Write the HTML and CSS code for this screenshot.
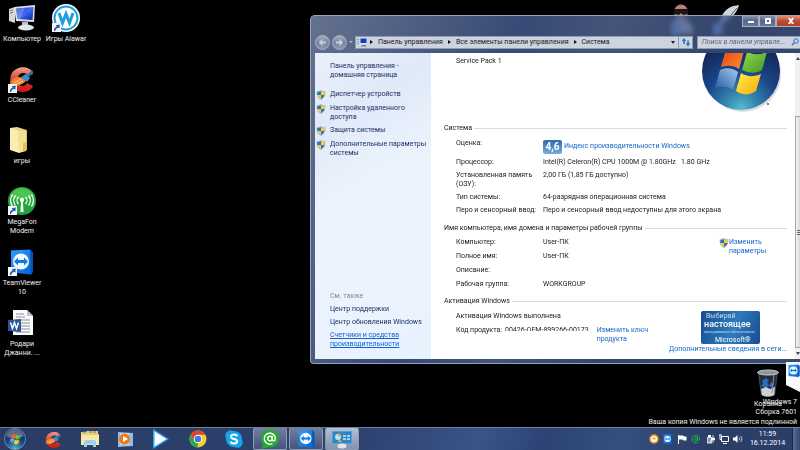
FILE: index.html
```html
<!DOCTYPE html>
<html lang="ru">
<head>
<meta charset="utf-8">
<title>Система</title>
<link rel="stylesheet" href="styles.css">
</head>
<body>
<svg class="defs" aria-hidden="true">
  <defs>
    <linearGradient id="gBlue" x1="0" y1="0" x2="1" y2="1"><stop offset="0" stop-color="#1a2fb5"/><stop offset=".5" stop-color="#3f6bf0"/><stop offset="1" stop-color="#0a1fa0"/></linearGradient>
    <linearGradient id="gTv" x1="0" y1="0" x2="1" y2="1"><stop offset="0" stop-color="#2aa0ff"/><stop offset="1" stop-color="#0360d8"/></linearGradient>
    <linearGradient id="gRed" x1="0" y1="0" x2="0" y2="1"><stop offset="0" stop-color="#f0a090"/><stop offset=".5" stop-color="#d84030"/><stop offset="1" stop-color="#c81818"/></linearGradient>
    <linearGradient id="gFold" x1="0" y1="0" x2="1" y2="0"><stop offset="0" stop-color="#f8ecae"/><stop offset="1" stop-color="#dcbf5c"/></linearGradient>
    <radialGradient id="gOrb" cx=".5" cy=".98" r=".8"><stop offset="0" stop-color="#58bcd0"/><stop offset=".25" stop-color="#3487b0"/><stop offset=".6" stop-color="#1b4688"/><stop offset="1" stop-color="#122a5c"/></radialGradient>
    <linearGradient id="gR" x1="0" y1="0" x2="1" y2="1"><stop offset="0" stop-color="#e23b12"/><stop offset="1" stop-color="#ff9430"/></linearGradient>
    <linearGradient id="gG" x1="0" y1="0" x2="1" y2="1"><stop offset="0" stop-color="#96d84e"/><stop offset="1" stop-color="#3f9822"/></linearGradient>
    <linearGradient id="gB" x1="0" y1="1" x2="1" y2="0"><stop offset="0" stop-color="#2558a6"/><stop offset="1" stop-color="#a3cbee"/></linearGradient>
    <linearGradient id="gY" x1="0" y1="0" x2="1" y2="1"><stop offset="0" stop-color="#fff04a"/><stop offset="1" stop-color="#f8a810"/></linearGradient>
    <symbol id="shield" viewBox="0 0 10 10">
      <path d="M5 0C3.700 .9 2 1.200.6 1.200.4 5 1.300 8 5 10 8.700 8 9.600 5 9.400 1.200 8 1.200 6.300.9 5 0z" fill="#a9b8c8"/>
      <path d="M5 1.200V5H1.400C1.300 4 1.300 3 1.400 2 2.800 2 4 1.700 5 1.200z" fill="#2a74cc"/><path d="M5 1.200V5h3.600c.1-1 .1-2 0-3C7.200 2 6 1.700 5 1.200z" fill="#f6cf38"/>
      <path d="M1.400 5H5v3.900C3 7.800 1.800 6.500 1.400 5z" fill="#f6cf38"/><path d="M8.600 5H5v3.900C7 7.800 8.200 6.500 8.600 5z" fill="#2a74cc"/>
    </symbol>
    <symbol id="short" viewBox="0 0 9 9"><path d="M0 0h9v9H0z" fill="#f4f7fb"/><path d="M2 8C1.700 5.500 3 4 4.700 3.700L3.700 2.300 7.700 1.400 7.500 5.600 6.200 4.800C4.500 5.300 3.300 6.300 3.300 8z" fill="#235aa8"/></symbol>
    <symbol id="flag" viewBox="0 0 54 54">
      <path d="M12 6C18 3 24 4 30 8L25 26C20 22 14 22 7 24z" fill="url(#gR)"/>
      <path d="M33 9C40 12 46 12 53 9L48 27C42 31 34 30 28 27z" fill="url(#gG)"/>
      <path d="M6 27C12 24 19 25 24 29L19 47C14 43 7 43 1 45z" fill="url(#gB)"/>
      <path d="M27 30C33 34 40 34 47 31L42 48C35 53 28 52 22 48z" fill="url(#gY)"/>
    </symbol>
    <symbol id="cc" viewBox="0 0 26 26">
      <path d="M24 8C22-1 6-1 2 9-1 18 5 26 13 26c4 0 9-1 11-6l-6-3c-2 4-7 4-9 0-2-5 1-10 5-10 3 0 4 1 4 3z" fill="url(#gRed)"/>
      <path d="M1 16C5 11 9 10 14 12l3 3C12 20 5 21 2 19z" fill="#f08030"/><path d="M5 17l7-4M6 19l8-4" stroke="#ffd090" fill="none"/>
      <path d="M12 11l5-3 4 4-3 4z" fill="#2f8fd0"/><path d="M18 9l5-5 1 2-4 5z" fill="#3c6ca8"/>
    </symbol>
    <symbol id="tv" viewBox="0 0 24 26"><path d="M1 2L20 1l3 3v19l-2 3L1 24z" fill="url(#gTv)"/><path d="M20 1l3 3v19l-2 3z" fill="#0a4fb4"/><circle cx="11" cy="13" r="8" fill="#f5f8fb"/><path d="M4 13l4-4v2.500h6V9l4 4-4 4v-2.500H8V17z" fill="#0d7ce0"/></symbol>
  </defs>
</svg>

<div class="screen">
  <main class="desktop">
    <nav class="icons" aria-label="Рабочий стол">
      <a class="icon" href="#"><svg viewBox="0 0 28 28"><path d="M1 5l6-2v16l-6-2z" fill="#d4d8da"/><path d="M2 7l3-1M2 9l3-.5" stroke="#778"/><path d="M6 3l21-2-1 17-18-1z" fill="#d9e2ea"/><path d="M8 4.500L25.500 3l-1 13-15-1z" fill="url(#gBlue)"/><path d="M8 4.500L17 4l-5 11-2.500 0z" fill="#fff" opacity=".25"/><path d="M14 18h6v4h-6z" fill="#b8c2ca"/><ellipse cx="18" cy="23.500" rx="8" ry="3" fill="#dfe5ea"/></svg><span>Компьютер</span></a>
      <a class="icon" href="#"><svg viewBox="0 0 28 28"><use href="#cc" x="1" y="1" width="26" height="26"/><use href="#short" y="19" width="9" height="9"/></svg><span>CCleaner</span></a>
      <a class="icon" href="#"><svg viewBox="0 0 28 28"><path d="M2 2l7-1 10 3v20l-8 2-9-3z" fill="url(#gFold)"/><path d="M10 4l8 1v20l-7 2z" fill="#f4e294"/><path d="M2 2l8 3 1 22-9-3z" fill="#f9edb4"/><path d="M15 17l4-1v8l-4 1z" fill="#e2c34e"/></svg><span>игры</span></a>
      <a class="icon" href="#"><svg viewBox="0 0 28 28"><circle cx="14" cy="14" r="14" fill="#22a53a"/><path d="M2 8C8-1 20-1 26 8 20 14 8 14 2 8z" fill="#62cf62" opacity=".7"/><g fill="none" stroke="#fff" stroke-width="1.300"><path d="M10.500 10a5 5 0 000 7M7.500 8.500a8 8 0 000 10M4.500 7.500a11 11 0 000 12M17.500 10a5 5 0 010 7M20.500 8.500a8 8 0 010 10M23.500 7.500a11 11 0 010 12"/></g><circle cx="14" cy="13" r="2.200" fill="#fff"/><path d="M13.200 14h1.600l.8 11h-3.200z" fill="#fff"/><use href="#short" y="19" width="9" height="9"/></svg><span>MegaFon<br>Modem</span></a>
      <a class="icon" href="#"><svg viewBox="0 0 28 28"><use href="#tv" x="2" y="0" width="24" height="27"/><use href="#short" y="19" width="9" height="9"/></svg><span>TeamViewer<br>10</span></a>
      <a class="icon" href="#"><svg viewBox="0 0 28 28"><path d="M5 1h14l6 6v19H5z" fill="#fbfbfb"/><path d="M19 1v6h6z" fill="#bfc4c8"/><path d="M8 5h8M8 8h9M8 11h14M13 14h9M13 17h9M13 20h9M8 23h14" stroke="#8b8f94"/><path d="M0 11l13-1v13L0 22z" fill="#2b5797"/><path d="M2.500 13.500l2 6 2-6 2 6 2-6" fill="none" stroke="#fff" stroke-width="1.500"/></svg><span>Родари<br>Джанни. ...</span></a>
      <a class="icon" href="#"><svg viewBox="0 0 28 28"><circle cx="14" cy="14" r="14" fill="#fff"/><circle cx="14" cy="14" r="11.500" fill="none" stroke="#1c9fdc" stroke-width="2"/><path d="M7 9l3.500 10L14 10l3.500 9L21 9" fill="none" stroke="#1c9fdc" stroke-width="3"/><use href="#short" y="19" width="9" height="9"/></svg><span>Игры Alawar</span></a>
    </nav>

    <svg class="behind" viewBox="0 0 76 32" aria-hidden="true"><ellipse cx="10" cy="9" rx="7" ry="7.500" fill="#b88070"/><path d="M3 6h14v5l-5 1-2-2-2 2-5-1z" fill="#201418"/><path d="M-2 31c0-12 6-15 12-15s12 3 12 15z" fill="#d6d9e8"/><path d="M50 14C55 5 60 3 68 2 66 9 62 14 54 19l-10 12z" fill="#d0d4d6"/><path d="M44 31L66 5" stroke="#555d60"/><path d="M0 20h9v12H0zM42 20h10v12h-10z" fill="#6fb0ff"/></svg>

    <a class="icon bin" href="#"><svg viewBox="0 0 28 28"><path d="M4 3l20-1-3 24c-4 2-10 2-14 0z" fill="#596068"/><path d="M5 5h18l-2 17H7z" fill="#242d38"/><ellipse cx="14" cy="3.500" rx="10.500" ry="2.500" fill="#8d969d" stroke="#c6ccd0"/><path d="M8 12l4-3 3 3-2 1 2 3-3 3-5-2 2-2zM17 13l3 2-2 4-3-2z" fill="#2d6bbd"/><path d="M7 20l5-2 4 2 5-2-1 8c-4 2-9 2-12 0z" fill="#cdd1d4"/><path d="M20 6l-2 18" stroke="#8a939b"/></svg><span>Корзина</span></a>
    <p class="watermark">Windows 7<br>Сборка 7601<br>Ваша копия Windows не является подлинной</p>
    <svg class="sidetab" viewBox="0 0 14 30" aria-hidden="true"><path d="M0 0h14v30L0 23z" fill="#f8f9fb"/><use href="#tv" x="2" y="2" width="12" height="13"/></svg>

    <section class="window" aria-label="Система">
      <header class="chrome">
        <div class="caption">
          <button class="cap" aria-label="Свернуть"><svg viewBox="0 0 8 8"><path d="M1 4h6v2H1z"/></svg></button>
          <button class="cap" aria-label="Развернуть"><svg viewBox="0 0 8 8"><path fill-rule="evenodd" d="M1 1h6v6H1zM3 3v2h2V3z"/></svg></button>
          <button class="cap close" aria-label="Закрыть"><svg viewBox="0 0 8 8"><path d="M1 1h2l1 1.500L5 1h2L5.200 4 7 7H5L4 5.500 3 7H1l1.800-3z"/></svg></button>
        </div>
        <div class="navbar">
          <button class="round" aria-label="Назад"><svg viewBox="0 0 12 12"><path d="M6 2L2 6l4 4V7.200h4V4.800H6z"/></svg></button>
          <button class="round" aria-label="Вперёд"><svg viewBox="0 0 12 12"><path d="M6 2l4 4-4 4V7.200H2V4.800h4z"/></svg></button>
          <i class="tiny"></i>
          <div class="address">
            <svg class="pc" viewBox="0 0 10 9"><path d="M1 1v6" stroke="#567" stroke-dasharray="1"/><path d="M3 0h7v6H3z" fill="#dfe7ee"/><path d="M3.500.5h6v4.500h-6z" fill="#1738c8"/><path d="M5 7h4v1.500H4z" fill="#6d7f90"/></svg>
            <i class="arrow"></i><a href="#">Панель управления</a>
            <i class="arrow"></i><a href="#">Все элементы панели управления</a>
            <i class="arrow"></i><a href="#">Система</a>
            <i class="drop"></i>
            <button class="refresh" aria-label="Обновить"><svg viewBox="0 0 10 10"><path d="M3 1L.8 4h1.500v3h1.500V4h1.500zM7 9.500L4.800 6.500h1.500v-3h1.500v3h1.500z" fill="#2272c4"/></svg></button>
          </div>
          <div class="search">
            <input type="text" aria-label="Поиск" placeholder="Поиск в панели управле...">
            <svg viewBox="0 0 8 8"><circle cx="5" cy="3" r="2.200" fill="none" stroke="#2274c8"/><path d="M3.300 4.700L.8 7.200" stroke="#2274c8" stroke-width="1.300"/></svg>
          </div>
        </div>
      </header>

      <div class="body">
        <aside class="side">
          <div>
            <a class="home" href="#">Панель управления -<br>домашняя страница</a>
            <ul class="tasks">
              <li><svg class="sh"><use href="#shield"/></svg><a href="#">Диспетчер устройств</a></li>
              <li><svg class="sh"><use href="#shield"/></svg><a href="#">Настройка удаленного<br>доступа</a></li>
              <li><svg class="sh"><use href="#shield"/></svg><a href="#">Защита системы</a></li>
              <li><svg class="sh"><use href="#shield"/></svg><a href="#">Дополнительные параметры<br>системы</a></li>
            </ul>
          </div>
          <div class="also">
            <span>См. также</span>
            <a href="#">Центр поддержки</a>
            <a href="#">Центр обновления Windows</a>
            <a class="on" href="#">Счетчики и средства<br>производительности</a>
          </div>
        </aside>

        <div class="content">
          <div class="hero">
            <span>Service Pack 1</span>
            <svg class="logo" viewBox="0 0 90 66"><ellipse cx="46" cy="21" rx="38" ry="38" fill="#889" opacity=".3"/><circle cx="44" cy="18" r="39" fill="url(#gOrb)"/><use href="#flag" x="17" y="-10" width="54" height="54"/><circle cx="71" cy="51" r="1" fill="#555"/></svg>
          </div>

          <h2>Система</h2>
          <dl>
            <dt>Оценка:</dt><dd class="rate"><b>4,6</b><a href="#">Индекс производительности Windows</a></dd>
            <dt>Процессор:</dt><dd>Intel(R) Celeron(R) CPU 1000M @ 1.80GHz &nbsp; 1.80 GHz</dd>
            <dt>Установленная память<br>(ОЗУ):</dt><dd>2,00 ГБ (1,85 ГБ доступно)</dd>
            <dt>Тип системы:</dt><dd>64-разрядная операционная система</dd>
            <dt>Перо и сенсорный ввод:</dt><dd>Перо и сенсорный ввод недоступны для этого экрана</dd>
          </dl>

          <h2>Имя компьютера, имя домена и параметры рабочей группы</h2>
          <div class="split">
            <dl class="loose">
              <dt>Компьютер:</dt><dd>User-ПК</dd>
              <dt>Полное имя:</dt><dd>User-ПК</dd>
              <dt>Описание:</dt><dd></dd>
              <dt>Рабочая группа:</dt><dd>WORKGROUP</dd>
            </dl>
            <div class="change"><svg class="sh"><use href="#shield"/></svg><a href="#">Изменить<br>параметры</a></div>
          </div>

          <h2>Активация Windows</h2>
          <div class="split">
            <div class="act">
              <p>Активация Windows выполнена</p>
              <div class="keyrow"><span>Код продукта:</span><span class="key">00426-OEM-899266-00173</span><a href="#">Изменить ключ<br>продукта</a></div>
            </div>
            <div class="genuine"><span>Выбирай</span><strong>настоящее</strong><small>программное обеспечение</small><em>Microsoft®</em></div>
          </div>
          <a class="more" href="#">Дополнительные сведения в сети...</a>
        </div>
        <div class="scroll" aria-hidden="true"><i class="up"></i><i class="thumb"></i><i class="down"></i></div>
      </div>
    </section>
  </main>

  <footer class="taskbar">
    <button class="start" aria-label="Пуск"><svg viewBox="0 0 22 22"><circle cx="11" cy="11" r="10.500" fill="url(#gOrb)" stroke="#8ca6c4" stroke-width=".7"/><path d="M2 8C5-1 17-1 20 8 14 11 8 11 2 8z" fill="#fff" opacity=".3"/><use href="#flag" x="5" y="5" width="12" height="12"/></svg></button>
    <button class="slot" aria-label="CCleaner"><svg viewBox="0 0 20 20"><use href="#cc" x="1" y="2" width="17" height="17"/></svg></button>
    <button class="slot" aria-label="Проводник"><svg viewBox="0 0 20 20"><path d="M1 3h5l1-1h11v3h1v11H1z" fill="#e9cf7c"/><path d="M3 3h3M9 3h3" stroke="#3fa05a"/><path d="M13 3h3" stroke="#d25a3a"/><path d="M1 6h18v10H1z" fill="#f8e9a8"/><path d="M4 18v-5q0-2 2-2h8q2 0 2 2v5h-3v-3H7v3z" fill="#9cd0ee"/></svg></button>
    <button class="slot" aria-label="Проигрыватель"><svg viewBox="0 0 20 20"><path d="M2 3l15 1v13l-15 1z" fill="#8fc0e4"/><path d="M4 4h9v12H4z" fill="#c1def2"/><circle cx="8.500" cy="10" r="5.500" fill="#f0781e"/><path d="M7 7l5 3-5 3z" fill="#fff"/></svg></button>
    <button class="slot" aria-label="Плеер"><svg viewBox="0 0 20 20"><path d="M1 0l16 10L1 20z" fill="#28a8e8"/><path d="M2.500 2.500l12 7.500-12 7.500z" fill="#fff"/></svg></button>
    <button class="slot" aria-label="Chrome"><svg viewBox="0 0 20 20"><circle cx="10" cy="10" r="8.500" fill="#f6cc30"/><path d="M17.400 5.800H10l-3.900 6.500L2.600 5.800A8.500 8.500 0 0117.400 5.800z" fill="#de4433"/><path d="M2.600 5.800L6.100 12.300 10 14.500 9.500 18.500A8.500 8.500 0 012.600 5.800z" fill="#31a350"/><circle cx="10" cy="10" r="4.200" fill="#fff"/><circle cx="10" cy="10" r="3.300" fill="#3a7de0"/></svg></button>
    <button class="slot" aria-label="Skype"><svg viewBox="0 0 20 20"><circle cx="10" cy="10" r="8" fill="#12a5ea"/><circle cx="6.500" cy="6.500" r="5.200" fill="#12a5ea"/><circle cx="13.500" cy="13.500" r="5.200" fill="#12a5ea"/><path d="M13.200 7.300C12 5 7 5 7 7.700c0 3 6.200 1.600 6.200 4.600 0 2.800-5.400 3-6.700.4" fill="none" stroke="#fff" stroke-width="2"/></svg></button>
    <button class="slot open" aria-label="Агент"><svg viewBox="0 0 20 20"><circle cx="10" cy="9.500" r="9" fill="#25ab2c"/><path d="M3 14l-1 6 7-2z" fill="#25ab2c"/><circle cx="10" cy="9.500" r="2.300" fill="none" stroke="#fff" stroke-width="1.400"/><path d="M12.300 7v3.500c0 2 3 2 3-1A5.500 5.500 0 1012.500 14.500" fill="none" stroke="#fff" stroke-width="1.400"/></svg></button>
    <button class="slot open" aria-label="TeamViewer"><svg viewBox="0 0 20 20"><use href="#tv" x="2" y="0" width="17" height="19"/></svg></button>
    <button class="slot open current" aria-label="Система"><svg viewBox="0 0 20 20"><path d="M0 2h20v13H0z" fill="#4ba3de"/><path d="M1 3h18v11H1z" fill="#2f84c6"/><circle cx="6" cy="8" r="3" fill="#bfe2f6"/><path d="M6 8V4a4 4 0 013 3z" fill="#f7a62a"/><path d="M11 6h3v2h-3zM15 6h3v2h-3zM11 9h3v2h-3zM15 9h3v2h-3z" fill="#a6d4f0"/><path d="M6 12l2-1 2 2H6z" fill="#f0bf35"/><ellipse cx="10" cy="17" rx="4.500" ry="2.500" fill="#e6e4df"/></svg></button>
    <div class="tray">
      <svg viewBox="0 0 10 10"><circle cx="5" cy="5" r="4.700" fill="#f49a1c"/><circle cx="5" cy="5" r="2.400" fill="none" stroke="#fff" stroke-width="1.400"/><path d="M5 5v3" stroke="#fff" stroke-width="1.500"/></svg>
      <svg viewBox="0 0 10 10"><use href="#tv" width="10" height="10"/></svg>
      <svg viewBox="0 0 10 10"><path d="M1.500 1v9" stroke="#fff"/><path d="M2 1.500h4l1 1h2.500v4H6.500l-1-1H2z" fill="#fff"/></svg>
      <svg viewBox="0 0 10 10"><circle cx="5" cy="5" r="1.500" fill="none" stroke="#20c040"/><path d="M6.500 3.500V6c.5 1 2 .5 2-1A3.700 3.700 0 106.500 8.400" fill="none" stroke="#20c040"/></svg>
      <svg viewBox="0 0 10 10"><path d="M2 3h5v6.500H2z" fill="#ccd2da"/><path d="M3 1h3v2H3z" fill="#fff"/><path d="M8 1v3M6.500 4h3v2h-3zM8 6v3" stroke="#fff" fill="#fff" stroke-width=".8"/><path d="M3 5h3M3 7h2" stroke="#435270"/></svg>
      <svg viewBox="0 0 10 10"><path d="M2.500 2.500h7v5h-7zM4 9.500h4M1 1v4.500h1.500M0 1h3" fill="none" stroke="#fff"/></svg>
      <svg viewBox="0 0 10 10"><path d="M0 3.500h2L4.500 1v8L2 6.500H0z" fill="#fff"/><path d="M6 3.500a2 2 0 010 3M7.500 2a4 4 0 010 6" fill="none" stroke="#dde4ee" stroke-width=".8"/></svg>
    </div>
    <time class="clock">11:59<br>16.12.2014</time>
    <button class="peek" aria-label="Свернуть все окна"></button>
  </footer>
</div>
</body>
</html>
```
FILE: styles.css
```css
* { box-sizing: border-box; }
body {
  margin: 0;
  background: #000;
  color: #1a1a1a;
  font: 7px/9px Roboto, "Noto Sans", sans-serif;
}
a { color: inherit; text-decoration: none; }
button { border: 0; padding: 0; background: none; font: inherit; }
h2, p, dl, dd, ul { margin: 0; padding: 0; font: inherit; }
svg { display: block; flex: none; }
.defs { position: absolute; width: 0; height: 0; }

.screen { display: grid; grid-template-rows: 1fr 23px; min-height: 100vh; }
.desktop { position: relative; overflow: hidden; }

/* Desktop icons */
.icons {
  display: grid;
  grid-auto-flow: column;
  grid-template-rows: repeat(6, 61px);
  grid-auto-columns: 44px;
  padding-top: 4px;
  justify-content: start;
}
.icon {
  display: flex;
  flex-direction: column;
  align-items: center;
  gap: 3px;
  color: #f0f0f0;
  text-align: center;
  white-space: nowrap;
}
.icon svg { width: 28px; height: 28px; }
.bin { position: absolute; right: 18px; bottom: 18px; }
.watermark {
  position: absolute;
  right: 3px;
  bottom: 0;
  color: #eee;
  text-align: right;
  line-height: 10px;
}
.sidetab { position: absolute; right: 0; bottom: 35px; width: 14px; height: 30px; z-index: 2; }
.behind { position: absolute; top: 3px; right: 53px; width: 76px; height: 32px; }

/* Window */
.window {
  position: absolute;
  top: 15px;
  left: 310px;
  right: 0;
  display: flex;
  flex-direction: column;
  padding: 0 0 4px 4px;
  border: 1px solid #97a3b8;
  border-right: 0;
  border-radius: 5px 0 0 4px;
  background: linear-gradient(110deg, rgba(108, 122, 154, .93), rgba(62, 82, 130, .9) 35%, rgba(84, 102, 148, .82) 50%, rgba(64, 86, 134, .8) 70%, rgba(72, 94, 140, .8));
  backdrop-filter: blur(2px);
}
.chrome { height: 37px; }
.caption { display: flex; justify-content: flex-end; height: 11px; }
.cap {
  display: grid;
  place-items: center;
  width: 17px;
  border: 1px solid #a7b1c6;
  border-top: 0;
  background: linear-gradient(#8793ae, #55648a 50%, #69779a);
}
.cap svg { width: 8px; height: 8px; fill: #fff; }
.close { width: 24px; border-right: 0; background: linear-gradient(#d89484, #c04a32 50%, #b54028); padding-left: 4px; }
.navbar { display: flex; align-items: center; height: 18px; margin-top: 6px; }
.round {
  display: grid;
  place-items: center;
  width: 15px;
  height: 15px;
  margin-right: 2px;
  border: 1px solid #a5b0c4;
  border-radius: 50%;
  background: linear-gradient(#a3adc0, #77849f 50%, #8e99b0);
}
.round svg { width: 11px; height: 11px; fill: #c8cfdc; }
.tiny { border: 2px solid transparent; border-top: 2px solid #b0bace; margin: 2px 2px 0 0; }
.address, .search {
  display: flex;
  align-items: center;
  height: 13px;
  border: 1px solid #8f9bb2;
  background: #cdd3df;
}
.address { flex: 1; padding-left: 1px; gap: 5px; margin-right: 4px; }
.pc { width: 10px; height: 9px; }
.arrow { border: 2px solid transparent; border-left: 3px solid #111; border-right: 0; }
.address .pc + .arrow { margin-left: -2px; }
.drop { border: 2px solid transparent; border-top: 3px solid #223; border-bottom: 0; margin-left: auto; }
.refresh { display: grid; place-items: center; width: 14px; height: 11px; border-left: 1px solid #8f9bb2; margin-left: -2px; }
.refresh svg { width: 10px; height: 10px; }
.search { width: 103px; padding: 0 1px 0 4px; border-right: 0; }
.search input { flex: 1; min-width: 0; padding: 0; border: 0; background: none; font: italic 7px/9px Roboto, sans-serif; }
.search input::placeholder { color: #5c667f; }
.search svg { width: 8px; height: 8px; }

.body { display: grid; grid-template-columns: 116px 1fr 5px; min-height: 306px; background: #fff; }
.side {
  display: flex;
  flex-direction: column;
  justify-content: space-between;
  padding: 9px 0 10px 15px;
  background: linear-gradient(150deg, #eaf1fb, #dfe9f8 20%, #edf4fd 45%, #e8f2fe);
  color: #1a3268;
  white-space: nowrap;
}
.home { display: block; }
.tasks { list-style: none; display: grid; gap: 4px; margin: 10px 0 0 -14px; }
.tasks li { display: flex; gap: 4px; }
.sh { width: 10px; height: 10px; }
.also { display: grid; gap: 4px; }
.also span { color: #858b98; }
.also .on { color: #0c62d8; text-decoration: underline; }

.content { display: flex; flex-direction: column; padding: 0 8px 0 13px; }
.hero { display: flex; justify-content: space-between; height: 71px; padding-left: 12px; }
.hero span { padding-top: 4px; }
.logo { width: 90px; height: 66px; }
h2 { display: flex; align-items: center; gap: 2px; }
h2::after { content: ""; flex: 1; height: 1px; background: #dadada; }
dl {
  display: grid;
  grid-template-columns: 87px 1fr;
  row-gap: 4px;
  align-content: start;
  padding: 6px 0 9px 12px;
  white-space: nowrap;
}
.loose { flex: 1; row-gap: 5px; padding-top: 5px; padding-bottom: 8px; }
.rate { display: flex; align-items: center; gap: 2px; height: 15px; }
.rate b { width: 19px; border-radius: 2px; background: linear-gradient(#2c6cad, #75aedb); color: #fff; font-size: 10px; line-height: 14px; text-align: center; }
.content a { color: #1467c8; }
.split { display: flex; justify-content: space-between; }
.change { display: flex; width: 68px; padding-top: 5px; }
.act { padding: 6px 0 0 12px; }
.keyrow { display: flex; margin-top: 5px; white-space: nowrap; }
.key { height: 5px; margin: 0 8px 0 3px; overflow: hidden; }
.genuine {
  display: flex;
  flex-direction: column;
  width: 59px;
  margin: 5px 27px 0 0;
  padding: 1px 0 0 3px;
  border-radius: 2px;
  background: linear-gradient(110deg, #164c90, #2d7cbd 55%, #174d90);
  color: #fff;
  line-height: 8px;
  white-space: nowrap;
}
.genuine span { padding-left: 2px; color: #c7dcf0; }
.genuine strong { font-size: 9px; font-weight: 500; }
.genuine small { font-size: 4px; color: #c7dcf0; }
.genuine em { padding-left: 11px; font-style: normal; }
.more { align-self: flex-end; margin-top: 1px; }

.scroll { display: flex; flex-direction: column; align-items: center; background: #f0f0f2; overflow: hidden; }
.up { margin: 4px 0; border: 2px solid transparent; border-bottom: 3px solid #444; border-top: 0; }
.down { margin: 4px 0; border: 2px solid transparent; border-top: 3px solid #444; border-bottom: 0; }
.thumb { flex: 1; width: 5px; margin-top: 52px; border: 1px solid #a4a6ac; border-right: 0; background: linear-gradient(90deg, #f4f4f6, #d6d7dc); }
.thumb { display: grid; place-items: center; }
.thumb::after { content: ""; width: 3px; height: 5px; background: repeating-linear-gradient(#666 0 1px, transparent 1px 2px); }

/* Taskbar */
.taskbar {
  display: flex;
  border-top: 1px solid #72809c;
  background: linear-gradient(100deg, #2a3c64, #2d426f 45%, #3a5488 60%, #2c4374 68%, #34507f 78%, #2a3e68 88%);
  color: #fff;
}
.start { display: grid; align-items: center; width: 36px; padding-left: 4px; }
.start svg { width: 22px; height: 22px; }
.slot { display: grid; place-items: center; width: 34px; margin: 0 1px; }
.slot svg { width: 20px; height: 20px; }
.open { border: 1px solid #8e9bb4; border-top: 0; border-radius: 2px; background: linear-gradient(#72809e, #43547b); }
.current { background: linear-gradient(#b6bfd0, #8492b0); }
.tray { display: flex; align-items: center; gap: 4px; margin-left: auto; }
.tray svg { width: 10px; height: 10px; }
.clock { width: 49px; padding-top: 2px; text-align: center; }
.peek { width: 8px; border-left: 1px solid #1a2744; background: linear-gradient(90deg, #5a6d94, #33486f); }
```
